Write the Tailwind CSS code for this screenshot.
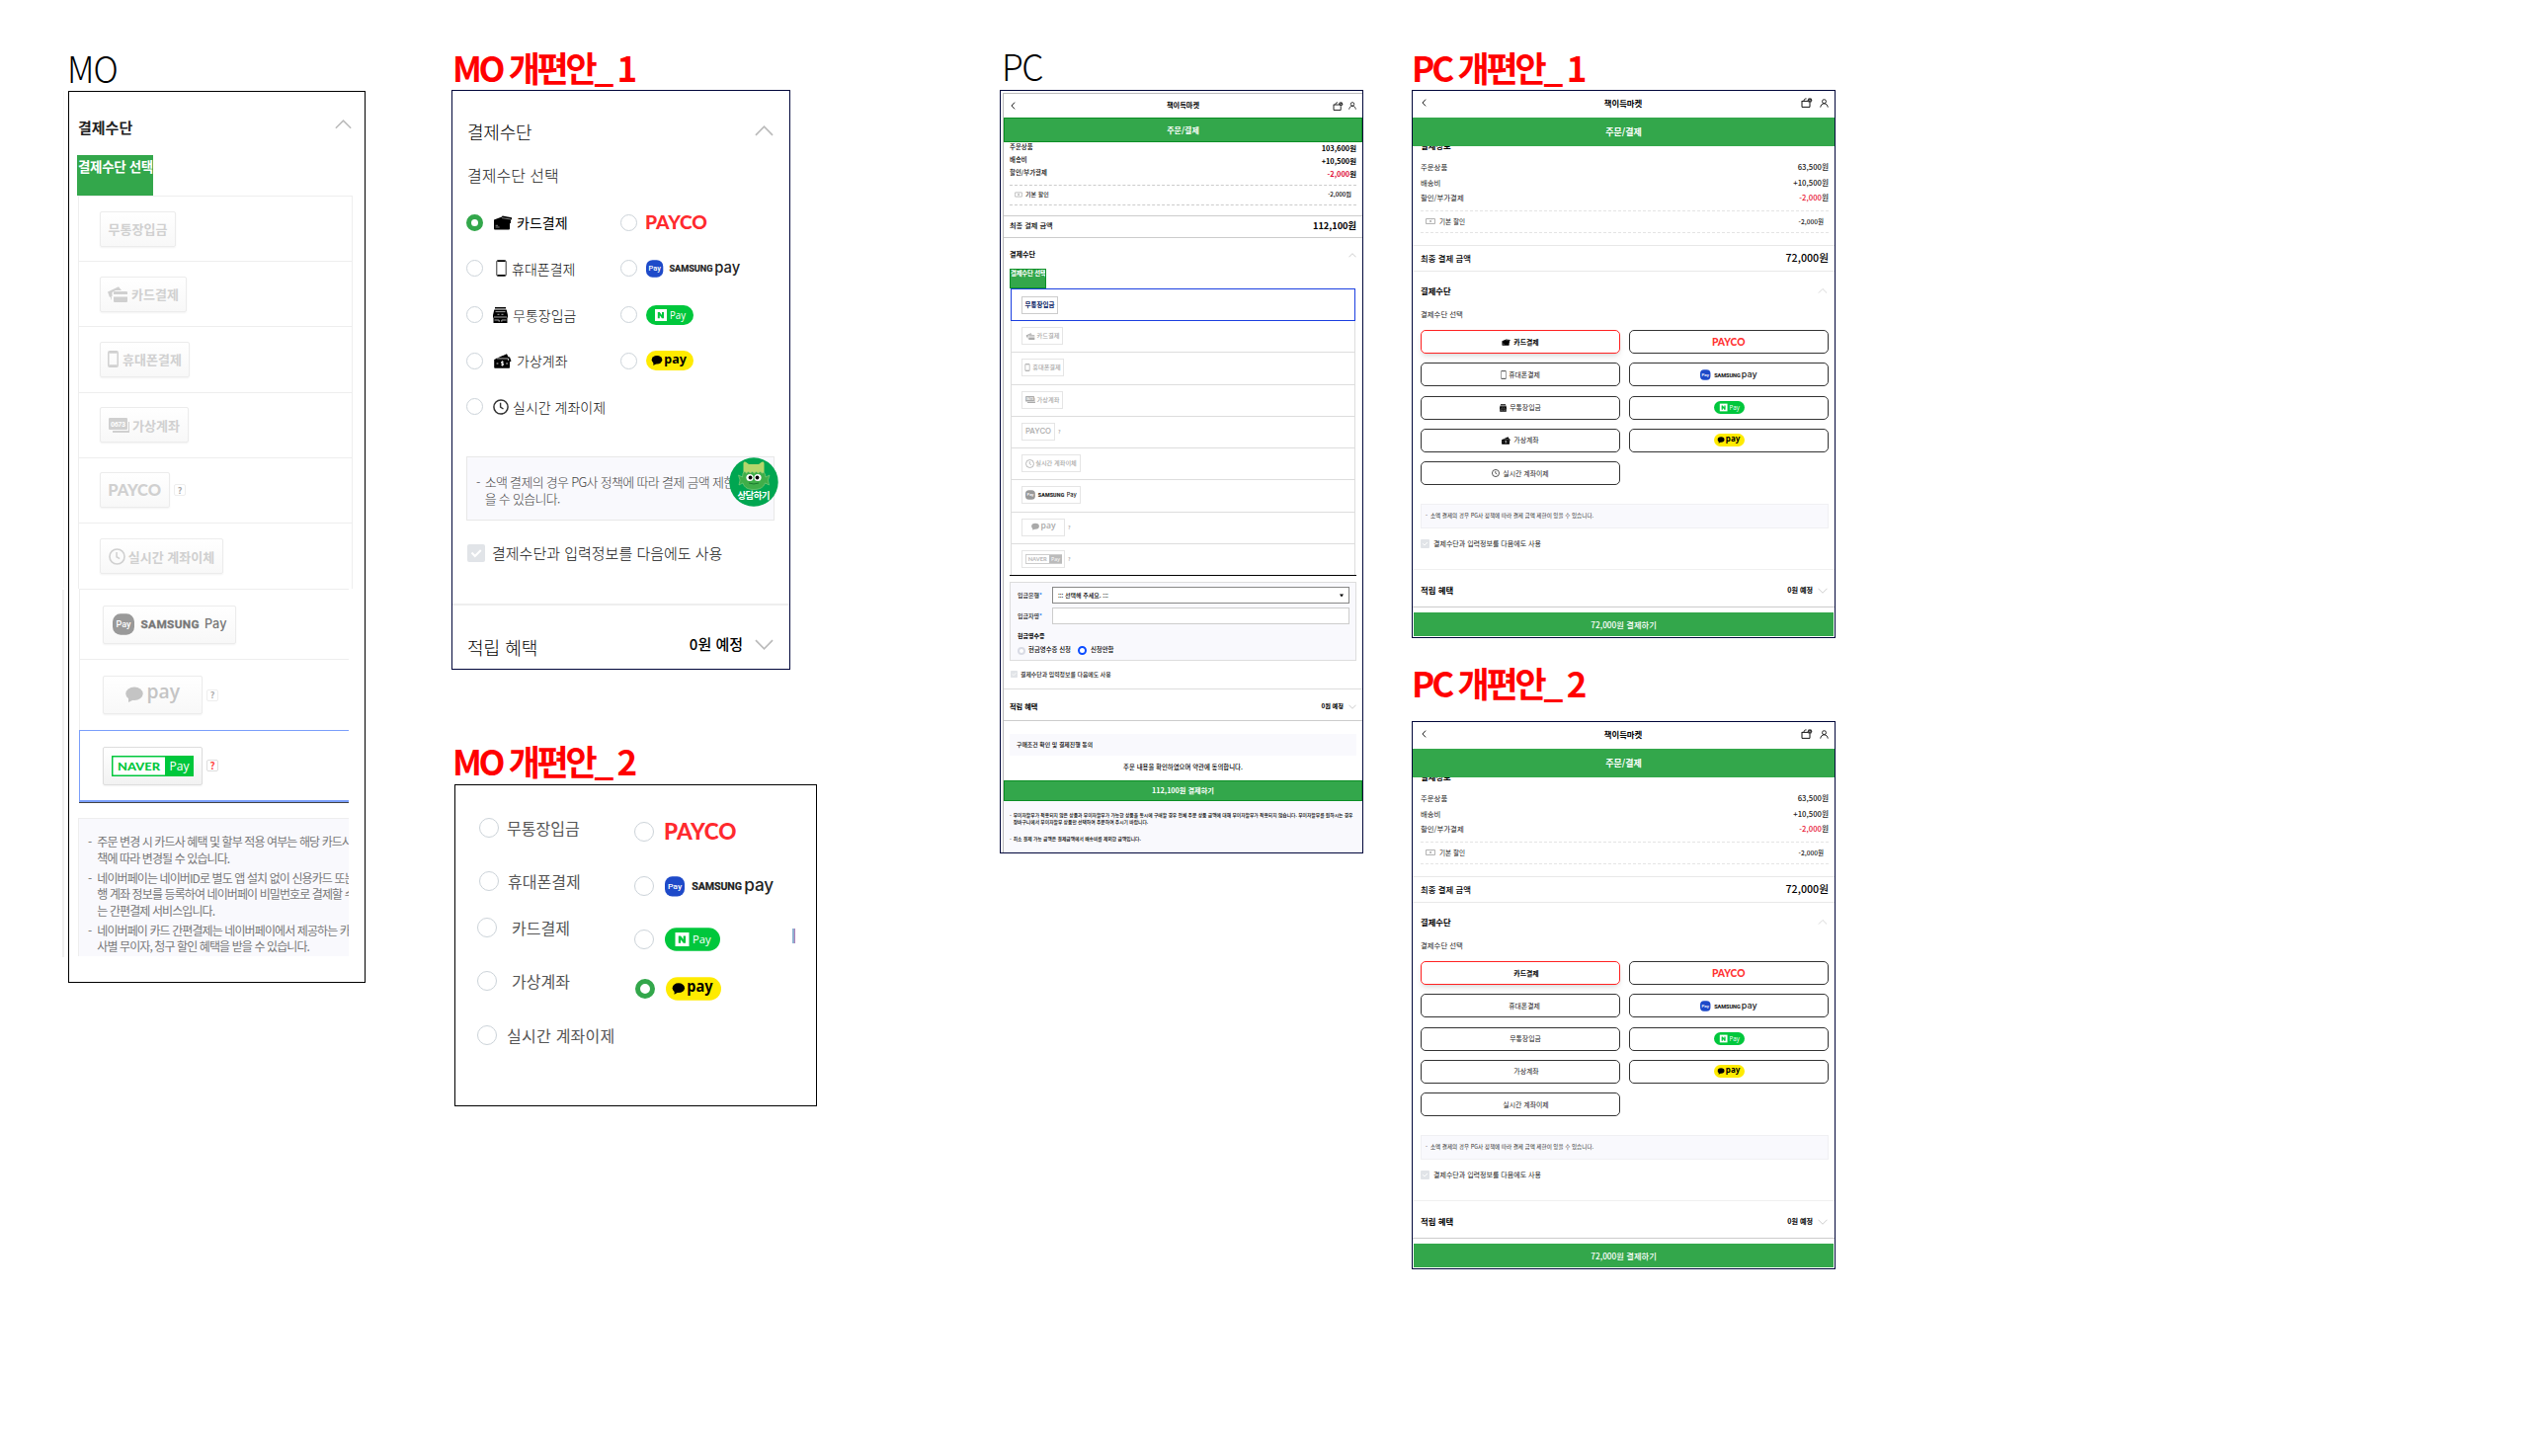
<!DOCTYPE html>
<html lang="ko">
<head>
<meta charset="utf-8">
<title>결제수단 개편안</title>
<script src="https://cdn.jsdelivr.net/npm/@tailwindcss/browser@4"></script>
</head>
<body class="bg-white">
<!-- Shared icons and payment logos -->
<svg class="hidden">
  <symbol id="i-card" viewBox="0 0 20 15"><path fill="currentColor" d="M1 4.500 9 1.500l.6-.9 9.400 1.600v2l-1 .2-.1 3.600-.9.200V13.500a1 1 0 0 1-1 1H2a1 1 0 0 1-1-1z"/><path d="M9 2.600 18 4M2.600 12h4M2.600 10.300h2.500" stroke="#fff" stroke-width=".7" opacity=".7"/></symbol>
  <symbol id="i-card2" viewBox="0 0 20 16"><g fill="currentColor"><path d="M0 5.500 11 .3 14 4H8L4.500 6v4L2 11zM3 11.500l1-1.500v4z"/><path fill-rule="evenodd" d="M7 5h12a1 1 0 0 1 1 1v9a1 1 0 0 1-1 1H7a1 1 0 0 1-1-1V6a1 1 0 0 1 1-1zm-1 3v2.500h14V8z"/></g></symbol>
  <symbol id="i-phone" viewBox="0 0 11 17"><rect x=".8" y=".6" width="9.400" height="15.800" rx="1.300" fill="none" stroke="currentColor" stroke-width=".8"/><path d="M1.500 1.300h8M1.500 15.700h8" stroke="currentColor" stroke-width="1.300"/></symbol>
  <symbol id="i-phone2" viewBox="0 0 11 17"><rect x=".8" y=".8" width="9.400" height="15.400" rx="1.300" fill="none" stroke="currentColor" stroke-width="1.500"/><path d="M1.500 1.800h8M1.500 15.200h8" stroke="currentColor" stroke-width="2"/></symbol>
  <symbol id="i-bank" viewBox="0 0 15 16"><path fill="currentColor" d="M2 0h11v1.500H2zM1.300 2.600h12.400L15 8v2.500h-.5V16H.5v-5.500H0V8z"/><path d="M2.500 4.600h10M1 10h13M1.500 13h4.700v1.800M8.800 14.800V13h4.700M4.500 7.300h2M8.500 7.300h2" stroke="#fff" stroke-width=".8" fill="none" opacity=".8"/></symbol>
  <symbol id="i-cash" viewBox="0 0 18 15"><path fill="currentColor" d="M2 5 13 .2l1.500 3 1.500.3 1.500 4-1.500 1V14a.8.8 0 0 1-.8.8H1A.8.8 0 0 1 .2 14V6l1.300-.6z"/><path d="M3 4.900 14.500 5v2" stroke="#fff" stroke-width=".7" fill="none"/><path d="M9.800 8.300H7.500v1.600h2v1.700H7.200M8.500 7.300v5.300M2.600 10h1.800M12.200 10H14" stroke="#fff" stroke-width=".8" fill="none"/></symbol>
  <symbol id="i-acct" viewBox="0 0 21 15"><path fill="currentColor" d="M1 0h17a1 1 0 0 1 1 1v10a1 1 0 0 1-1 1H1a1 1 0 0 1-1-1V1a1 1 0 0 1 1-1zM20 4h1v11H4v-2h16z"/><text x="2" y="8.500" font-family="Roboto" font-weight="700" font-size="7" textLength="15" fill="#fff">0673</text></symbol>
  <symbol id="i-clock" viewBox="0 0 16 16"><circle cx="8" cy="8" r="7.100" fill="none" stroke="currentColor" stroke-width="1.500"/><path d="M7.600 3.800V8.200L10.500 10" fill="none" stroke="currentColor" stroke-width="1.400"/></symbol>
  <symbol id="i-up" viewBox="0 0 20 11"><path d="M1 10 10 1l9 9" fill="none" stroke="#bbb" stroke-width="1.800"/></symbol>
  <symbol id="i-down" viewBox="0 0 20 11"><path d="M1 1l9 9 9-9" fill="none" stroke="#bbb" stroke-width="1.800"/></symbol>
  <symbol id="i-check" viewBox="0 0 18 18"><rect width="18" height="18" rx="2" fill="#e1e4e8"/><path d="M4.500 8.500l3.300 3.500 6-6" fill="none" stroke="#fff" stroke-width="2"/></symbol>
  <symbol id="i-back" viewBox="0 0 6 10"><path d="M5 .8 1 5l4 4.200" fill="none" stroke="#111" stroke-width="1.200"/></symbol>
  <symbol id="i-cart" viewBox="0 0 12 10"><path d="M1 3.400h6M1 3v6.400h8V5M3 3.200c0-1.800 1-2.300 2.500-2.300" fill="none" stroke="#111" stroke-width="1"/><circle cx="9" cy="2.600" r="2.300" fill="#333"/><path d="M8.300 1.800l1.500 1.500" stroke="#fff" stroke-width=".7"/></symbol>
  <symbol id="i-user" viewBox="0 0 10 10"><circle cx="5" cy="3" r="2.200" fill="none" stroke="#111" stroke-width="1"/><path d="M.8 9.600C1.200 6.800 2.800 5.400 5 5.400s3.800 1.400 4.200 4.200" fill="none" stroke="#111" stroke-width="1"/></symbol>
  <symbol id="i-coupon" viewBox="0 0 10 6"><rect x=".4" y=".4" width="9.200" height="5.200" rx=".6" fill="none" stroke="#888" stroke-width=".7"/><path d="M4 2l2.200 2M6 1.700 4.200 4.300" stroke="#888" stroke-width=".6"/></symbol>
  <symbol id="l-payco" viewBox="0 0 62 15"><text x="-1" y="14.300" font-family="Lato" font-weight="900" font-size="19.600" textLength="63" lengthAdjust="spacingAndGlyphs" fill="currentColor">PAYCO</text></symbol>
  <symbol id="l-samsung" viewBox="0 0 96 18"><rect y=".2" width="17.300" height="17.500" rx="6.500" fill="#1e4ac9"/><text x="2.500" y="11.300" font-family="Roboto" font-weight="500" font-size="7" textLength="12.400" lengthAdjust="spacingAndGlyphs" fill="#fff">Pay</text><text x="23.500" y="12.400" font-family="Roboto" font-weight="700" font-size="9.200" textLength="44" fill="#222" stroke="#222" stroke-width=".2">SAMSUNG</text><text x="69.300" y="12.700" font-family="Inter" font-weight="500" font-size="15" textLength="26" lengthAdjust="spacingAndGlyphs" fill="#222">pay</text></symbol>
  <symbol id="l-samsung-g" viewBox="0 0 116 22"><rect y=".3" width="22" height="21.400" rx="8" fill="#999"/><text x="3.500" y="13.800" font-family="Roboto" font-weight="500" font-size="8.500" textLength="15" lengthAdjust="spacingAndGlyphs" fill="#fff">Pay</text><text x="28.500" y="15.300" font-family="Roboto" font-weight="700" font-size="11.800" textLength="59" fill="currentColor" stroke="currentColor" stroke-width=".3">SAMSUNG</text><text x="93" y="15.300" font-family="Inter" font-weight="500" font-size="13" textLength="22.500" lengthAdjust="spacingAndGlyphs" fill="currentColor">Pay</text></symbol>
  <symbol id="l-npay" viewBox="0 0 48 20"><rect width="48" height="20" rx="10" fill="#00c73c"/><path fill="#fff" d="M9 4h12v12H9z"/><path fill="#00c73c" d="M11.800 7h2l2.200 3V7h2v6.300h-2l-2.200-3v3h-2z"/><text x="24" y="13.500" font-family="Open Sans" font-weight="400" font-size="10" textLength="16" lengthAdjust="spacingAndGlyphs" fill="#fff">Pay</text></symbol>
  <symbol id="l-kpay" viewBox="0 0 48 20"><rect width="48" height="20" rx="10" fill="#ffeb00"/><ellipse cx="11" cy="9.300" rx="5.300" ry="4.200"/><path d="M7.500 11.500 7.300 15l3.500-2z"/><text x="18.300" y="12.600" font-family="Noto Sans" font-weight="700" font-size="13" textLength="22.500" lengthAdjust="spacingAndGlyphs">pay</text></symbol>
  <symbol id="l-kpay-g" viewBox="0 0 56 20"><g fill="currentColor"><ellipse cx="9" cy="8.300" rx="8.700" ry="6.800"/><path d="M3 12l0 5 6-3z"/><text x="21.500" y="13" font-family="Open Sans" font-weight="600" font-size="19" textLength="33.500" lengthAdjust="spacingAndGlyphs">pay</text></g></symbol>
  <symbol id="l-naver" viewBox="0 0 83 21"><path fill="currentColor" d="M0 0h83v21H0z"/><path fill="#fff" d="M1.500 1.500h52.500v18H1.500z"/><text x="6" y="14.800" font-family="Lato" font-weight="900" font-size="12" textLength="43" lengthAdjust="spacingAndGlyphs" fill="currentColor">NAVER</text><text x="58.500" y="14.800" font-family="Open Sans" font-size="12.500" textLength="20" lengthAdjust="spacingAndGlyphs" fill="#fff">Pay</text></symbol>
</svg>

<main class="relative h-[1474px] w-[2562px] overflow-hidden bg-white font-['Noto_Sans_CJK_KR',sans-serif] leading-none whitespace-nowrap text-black">

  <!-- Board titles -->
  <h2 class="absolute left-[68px] top-[48px] origin-left scale-x-[0.94] text-[37px] leading-[40px] font-light tracking-[-1px]">MO</h2>
  <h2 class="absolute left-[1014px] top-[46px] origin-left scale-x-[0.96] text-[37px] leading-[40px] font-light tracking-[-1.500px]">PC</h2>
  <h2 class="absolute left-[458px] top-[48px] text-[35px] leading-[40px] font-bold tracking-[-3.300px] text-[#f00]">MO 개편안_ 1</h2>
  <h2 class="absolute left-[458px] top-[750px] text-[35px] leading-[40px] font-bold tracking-[-3.300px] text-[#f00]">MO 개편안_ 2</h2>
  <h2 class="absolute left-[1429px] top-[48px] text-[35px] leading-[40px] font-bold tracking-[-3.200px] text-[#f00]">PC 개편안_ 1</h2>
  <h2 class="absolute left-[1429px] top-[671px] text-[35px] leading-[40px] font-bold tracking-[-3.200px] text-[#f00]">PC 개편안_ 2</h2>

  <div class="absolute left-[64px] top-[92px] h-[503px] w-px bg-[#f7f7f7]"></div>
  <div class="absolute left-[63px] top-[597px] h-[372px] w-[2px] bg-[#f0f0f0]"></div>

  <!-- MO : current mobile -->
  <section class="absolute left-[69px] top-[92px] flex h-[903px] w-[301px] flex-col border border-black">
    <div class="flex h-[64px] shrink-0 items-center justify-between pt-[6px] pr-[13px] pl-[9px]">
      <h3 class="text-[15px] font-bold text-[#222]">결제수단</h3>
      <svg class="mb-1 h-[10px] w-[17px]"><use href="#i-up"/></svg>
    </div>
    <div class="ml-[8px] h-[41px] w-[77px] shrink-0 overflow-hidden bg-[#33a74b] pt-[5px] pl-px text-[13.500px] font-bold tracking-[-0.350px] text-white">결제수단 선택</div>
    <div class="ml-[9px] w-[278px] divide-y divide-[#eee] border border-b-0 border-[#eee] text-[13px] font-bold text-[#d0d0d0]">
      <div class="flex h-[66.200px] items-center pl-[21px]"><span class="flex h-[36px] w-[77px] items-center justify-center rounded-[2px] border border-[#ececec] bg-linear-to-b from-white to-[#f8f8f8] shadow-xs">무통장입금</span></div>
      <div class="flex h-[66.200px] items-center pl-[21px]"><span class="flex h-[36px] w-[88px] items-center justify-center gap-1 rounded-[2px] border border-[#ececec] bg-linear-to-b from-white to-[#f8f8f8] shadow-xs"><svg class="h-[16px] w-[20px]"><use href="#i-card2"/></svg>카드결제</span></div>
      <div class="flex h-[66.200px] items-center pl-[21px]"><span class="flex h-[36px] w-[91px] items-center justify-center gap-1 rounded-[2px] border border-[#ececec] bg-linear-to-b from-white to-[#f8f8f8] shadow-xs"><svg class="h-[17px] w-[11px]"><use href="#i-phone2"/></svg>휴대폰결제</span></div>
      <div class="flex h-[66.200px] items-center pl-[21px]"><span class="flex h-[36px] w-[90px] items-center justify-center gap-[3px] rounded-[2px] border border-[#ececec] bg-linear-to-b from-white to-[#f8f8f8] shadow-xs"><svg class="h-[15px] w-[21px]"><use href="#i-acct"/></svg>가상계좌</span></div>
      <div class="flex h-[66.200px] items-center gap-1 pl-[21px]"><span class="flex h-[36px] w-[71px] items-center justify-center rounded-[2px] border border-[#ececec] bg-linear-to-b from-white to-[#f8f8f8] shadow-xs"><svg class="h-[13px] w-[53px]"><use href="#l-payco"/></svg></span><span class="flex size-[12px] items-center justify-center rounded-[2px] border border-[#eee] text-[9px] text-[#aaa]">?</span></div>
      <div class="flex h-[66.200px] items-center pl-[21px]"><span class="flex h-[36px] w-[125px] items-center justify-center gap-[3px] rounded-[2px] border border-[#ececec] bg-linear-to-b from-white to-[#f8f8f8] shadow-xs"><svg class="size-[17px]"><use href="#i-clock"/></svg>실시간 계좌이체</span></div>
    </div>
    <div class="ml-[10px] w-[273px] shrink-0 border-l border-[#eee]">
      <div class="flex h-[71px] items-center border-t border-[#eee] pl-[23px]"><span class="flex h-[39px] w-[135px] items-center justify-center rounded-[2px] border border-[#ececec] bg-linear-to-b from-white to-[#f8f8f8] text-[#777] shadow-xs"><svg class="h-[22px] w-[116px]"><use href="#l-samsung-g"/></svg></span></div>
      <div class="flex h-[72px] items-center gap-1 border-t border-[#eee] pl-[23px]"><span class="flex h-[39px] w-[101px] items-center justify-center rounded-[2px] border border-[#ececec] bg-linear-to-b from-white to-[#f8f8f8] text-[#c4c4c4] shadow-xs"><svg class="h-[20px] w-[56px]"><use href="#l-kpay-g"/></svg></span><span class="flex size-[12px] items-center justify-center rounded-[2px] border border-[#eee] text-[9px] font-bold text-[#aaa]">?</span></div>
    </div>
    <div class="ml-[10px] w-[273px] shrink-0 border-b border-[#444]">
      <div class="flex h-[73px] items-center gap-1 border-t border-b-2 border-l border-[#7a9ffb] pl-[23px]"><span class="flex h-[39px] w-[101px] items-center justify-center rounded-[2px] border border-[#ddd] bg-linear-to-b from-white to-[#f2f2f2] text-[#00c73c] shadow-xs"><svg class="h-[21px] w-[83px]"><use href="#l-naver"/></svg></span><span class="flex size-[12px] items-center justify-center rounded-[2px] border border-[#ddd] text-[10px] font-bold text-[#f44]">?</span></div>
    </div>
    <ul class="mt-[15px] ml-[9px] flex h-[140px] w-[274px] shrink-0 flex-col gap-[3.500px] overflow-hidden border-t border-l border-[#eee] bg-[#f9f9fd] pt-[15px] pl-[9px] text-[12px] leading-[16.500px] tracking-[-0.900px] text-[#777]">
      <li class="flex gap-[6px]"><span>-</span><span>주문 변경 시 카드사 혜택 및 할부 적용 여부는 해당 카드사<br>책에 따라 변경될 수 있습니다.</span></li>
      <li class="flex gap-[6px]"><span>-</span><span>네이버페이는 네이버ID로 별도 앱 설치 없이 신용카드 또는<br>행 계좌 정보를 등록하여 네이버페이 비밀번호로 결제할 수<br>는 간편결제 서비스입니다.</span></li>
      <li class="flex gap-[6px]"><span>-</span><span>네이버페이 카드 간편결제는 네이버페이에서 제공하는 카<br>사별 무이자, 청구 할인 혜택을 받을 수 있습니다.</span></li>
    </ul>
  </section>

  <!-- MO revision 1 -->
  <section class="absolute left-[457px] top-[91px] flex h-[587px] w-[343px] flex-col border border-[#00063a]">
    <div class="flex h-[61px] items-end justify-between pr-[16px] pl-[15px] pb-[11px]"><h3 class="text-[18px] tracking-[-0.200px] font-light">결제수단</h3><svg class="mb-[4px] h-[11px] w-[19px]"><use href="#i-up"/></svg></div>
    <p class="flex h-[50px] items-center pl-[15px] text-[16px] font-light text-[#222]">결제수단 선택</p>
    <div class="grid grid-cols-[156px_1fr] auto-rows-[46.600px] items-center pl-[14px] text-[14px] font-light text-[#111] *:flex *:items-center">
      <div><span class="size-[17px] rounded-full border-[5px] border-[#33a74b]"></span><svg class="ml-[10px] h-[15px] w-[20px] text-black"><use href="#i-card"/></svg><b class="ml-[4px] text-black">카드결제</b></div>
      <div><span class="mr-[9px] size-[17px] rounded-full border border-[#ccd3d9]"></span><svg class="h-[15px] w-[62px] text-[#ff2a2e]"><use href="#l-payco"/></svg></div>
      <div><span class="size-[17px] rounded-full border border-[#ccd3d9]"></span><svg class="ml-[13px] h-[17px] w-[11px] text-black"><use href="#i-phone"/></svg><span class="ml-[5px]">휴대폰결제</span></div>
      <div><span class="mr-[9px] size-[17px] rounded-full border border-[#ccd3d9]"></span><svg class="h-[18px] w-[96px]"><use href="#l-samsung"/></svg></div>
      <div><span class="size-[17px] rounded-full border border-[#ccd3d9]"></span><svg class="ml-[10px] h-[16px] w-[15px] text-black"><use href="#i-bank"/></svg><span class="ml-[5px]">무통장입금</span></div>
      <div><span class="mr-[9px] size-[17px] rounded-full border border-[#ccd3d9]"></span><svg class="h-[20px] w-[48px]"><use href="#l-npay"/></svg></div>
      <div><span class="size-[17px] rounded-full border border-[#ccd3d9]"></span><svg class="ml-[11px] h-[15px] w-[18px] text-black"><use href="#i-cash"/></svg><span class="ml-[5px]">가상계좌</span></div>
      <div><span class="mr-[9px] size-[17px] rounded-full border border-[#ccd3d9]"></span><svg class="h-[20px] w-[48px]"><use href="#l-kpay"/></svg></div>
      <div><span class="size-[17px] rounded-full border border-[#ccd3d9]"></span><svg class="ml-[10px] size-[16px] text-[#333]"><use href="#i-clock"/></svg><span class="ml-[4px]">실시간 계좌이제</span></div>
    </div>
    <div class="relative mt-[27px] ml-[14px] h-[65px] w-[312px] shrink-0 border border-[#e8e8e8] bg-[#f9f9fd] pt-[16px] pl-[9px]">
      <p class="flex gap-[5px] text-[13px] leading-[17px] font-light tracking-[-0.700px] text-[#444]"><span>-</span><span>소액 결제의 경우 PG사 정책에 따라 결제 금액 제한<br>을 수 있습니다.</span></p>
      <svg class="absolute top-0 -right-[5px] size-[50px]" viewBox="0 0 50 50">
        <circle cx="25" cy="25" r="24.700" fill="#00a651"/>
        <path d="M14.500 17V6.500c0-2.500 2-2.500 3.500-1L20 7h10l2-1.500c1.500-1.500 3.500-1.500 3.500 1V17z" fill="#b5d66b"/>
        <path d="M14 16q2-3 3.500 0 2-3 4 0 2-3 4 0 2-3 4 0 2-3 4 0 1.500-2 3 1l.5 3 4-2-1.500 5 1 5-4-2c-2 5-6 6.500-11.500 6.500S15.500 31 14 26l-4 2 1-5-1.500-5 4 2z" fill="#3fae49" stroke="#9fd48a" stroke-width=".5"/>
        <circle cx="21" cy="20.500" r="3.600" fill="#fff"/><circle cx="29" cy="20.500" r="3.600" fill="#fff"/><circle cx="21.500" cy="20.500" r="1.900"/><circle cx="28.500" cy="20.500" r="1.900"/>
        <path d="M20 26q5 2 10 0" stroke="#1c7a30" fill="none"/>
        <text x="8.500" y="42" font-family="Noto Sans CJK KR" font-weight="700" font-size="9.500" textLength="33" fill="#fff">상담하기</text>
      </svg>
    </div>
    <div class="flex h-[84px] shrink-0 items-center pb-[19px] pl-[15px]"><svg class="size-[18px]"><use href="#i-check"/></svg><span class="ml-[7px] text-[15px] font-light text-[#111]">결제수단과 입력정보를 다음에도 사용</span></div>
    <div class="flex h-[66px] shrink-0 items-center border-t-2 border-[#eee] pt-[19px] pr-[16px] pl-[15px]"><h3 class="grow text-[18px] font-light">적립 혜택</h3><b class="mb-[6px] text-[15px] font-medium">0원 예정</b><svg class="ml-[12px] mb-1 h-[11px] w-[19px]"><use href="#i-down"/></svg></div>
  </section>

  <!-- MO revision 2 -->
  <section class="absolute left-[460px] top-[794px] flex h-[326px] w-[367px] border border-black text-[16px] text-[#555]">
    <div class="flex w-[168px] flex-col pt-[32.500px] pl-[22px] *:flex *:items-center">
      <div class="h-[20px] pl-[2px]"><span class="size-[20px] shrink-0 rounded-full border border-[#ccd3d9]"></span><span class="ml-[8px]">무통장입금</span></div>
      <div class="mt-[34.500px] h-[20px] pl-[2px]"><span class="size-[20px] shrink-0 rounded-full border border-[#ccd3d9]"></span><span class="ml-[9px]">휴대폰결제</span></div>
      <div class="mt-[26.500px] h-[20px]"><span class="size-[20px] shrink-0 rounded-full border border-[#ccd3d9]"></span><span class="ml-[15px]">카드결제</span></div>
      <div class="mt-[34.500px] h-[20px]"><span class="size-[20px] shrink-0 rounded-full border border-[#ccd3d9]"></span><span class="ml-[15px]">가상계좌</span></div>
      <div class="mt-[34.500px] h-[20px]"><span class="size-[20px] shrink-0 rounded-full border border-[#ccd3d9]"></span><span class="ml-[10px] tracking-[0.250px]">실시간 계좌이제</span></div>
    </div>
    <div class="ml-[13px] flex w-[150px] flex-col pt-[35px] *:flex *:items-center">
      <div class="h-[24px]"><span class="mr-[11px] size-[20px] rounded-full border border-[#ccd3d9]"></span><svg class="h-[17.500px] w-[72.500px] text-[#ff2a2e]"><use href="#l-payco"/></svg></div>
      <div class="mt-[31px] h-[24px]"><span class="mr-[11px] size-[20px] rounded-full border border-[#ccd3d9]"></span><svg class="h-[21px] w-[111px]"><use href="#l-samsung"/></svg></div>
      <div class="mt-[30px] h-[24px]"><span class="mr-[11px] size-[20px] rounded-full border border-[#ccd3d9]"></span><svg class="h-[24px] w-[56px]"><use href="#l-npay"/></svg></div>
      <div class="mt-[26px] h-[24px] pl-px"><span class="mr-[11px] size-[20px] rounded-full border-[5px] border-[#33a74b]"></span><svg class="h-[24px] w-[56px]"><use href="#l-kpay"/></svg></div>
    </div>
    <span class="mt-[145px] ml-[10px] h-[15px] w-[3px] border-r border-l-2 border-r-[#b080b8] border-l-[#8fb0d0]"></span>
  </section>

  <!-- PC : current desktop -->
  <section class="absolute left-[1012px] top-[91px] flex h-[773px] w-[368px] border border-[#00063a] pt-[2px] pl-[2px]">
    <div class="flex w-full flex-col border-t border-l border-[#bbb] text-[7px] font-medium text-[#222]">
      <div class="flex h-[24px] shrink-0 items-center pr-[6px] pl-[7px]"><svg class="h-[8px] w-[5px]"><use href="#i-back"/></svg><b class="ml-[18px] grow text-center text-[7.200px] text-black">책이득마켓</b><svg class="h-[9px] w-[11px]"><use href="#i-cart"/></svg><svg class="ml-[5px] size-[8px]"><use href="#i-user"/></svg></div>
      <div class="flex h-[25px] shrink-0 items-center justify-center border border-[#0b8f25] bg-[#33a74b] text-[8px] font-bold text-white">주문/결제</div>
      <div class="flex h-[43px] shrink-0 flex-col justify-between pt-[2px] pr-[6px] pb-[8px] pl-[6px] text-[6.400px] text-black">
        <div class="flex justify-between"><span>주문상품</span><b class="text-[7.400px]">103,600원</b></div>
        <div class="flex justify-between"><span>배송비</span><b class="text-[7.400px]">+10,500원</b></div>
        <div class="flex justify-between"><span>할인/부가결제</span><b class="text-[7.400px]"><span class="text-[#e0103a]">-2,000</span>원</b></div>
      </div>
      <div class="mx-[6px] flex h-[21px] shrink-0 items-center border-y border-dashed border-[#ccc] px-[5px] pb-px text-[6px]"><svg class="mr-[3px] h-[6px] w-[8px]"><use href="#i-coupon"/></svg><span class="grow">기본 할인</span><span class="text-[6.200px] text-black">-2,000원</span></div>
      <div class="mt-[10px] flex h-[23px] shrink-0 items-center justify-between border-y border-[#ccc] px-[6px] pb-px"><b class="text-[7.200px] font-medium text-black">최종 결제 금액</b><b class="text-[9.200px] text-black">112,100원</b></div>
      <div class="flex h-[31px] shrink-0 items-center justify-between px-[6px] pt-[3px]"><b class="text-[7.100px] text-black">결제수단</b><svg class="h-[5px] w-[8px]"><use href="#i-up"/></svg></div>
      <div class="ml-[6px] h-[20px] w-[37px] shrink-0 overflow-hidden border border-[#0b8f25] bg-[#33a74b] pt-[1px] text-[6.400px] font-bold tracking-[-0.200px] text-white">결제수단 선택</div>
      <div class="mx-[7px] flex h-[33px] shrink-0 items-center border border-[#1b3fe0] pl-[10px]"><span class="flex h-[18px] w-[37px] items-center justify-center border border-[#ccc] text-[6.500px] font-bold text-[#0a1c66]">무통장입금</span></div>
      <div class="mx-[7px] flex h-[257px] shrink-0 flex-col divide-y divide-[#ddd] border-x border-[#ddd] text-[6.200px] text-[#aaa] *:flex *:flex-1 *:items-center *:pb-px *:pl-[10px]">
        <div><span class="flex h-[18px] w-[42px] items-center justify-center gap-[2px] border border-[#e5e5e5]"><svg class="h-[7px] w-[10px]"><use href="#i-card2"/></svg>카드결제</span></div>
        <div><span class="flex h-[18px] w-[43px] items-center justify-center gap-[2px] border border-[#e5e5e5]"><svg class="h-[8px] w-[6px]"><use href="#i-phone2"/></svg>휴대폰결제</span></div>
        <div><span class="flex h-[18px] w-[42px] items-center justify-center gap-[2px] border border-[#e5e5e5]"><svg class="h-[7px] w-[10px]"><use href="#i-acct"/></svg>가상계좌</span></div>
        <div><span class="mr-[3px] flex h-[18px] w-[34px] items-center justify-center border border-[#e5e5e5] font-['Inter'] text-[7.800px]">PAYCO</span><span class="text-[5px] font-bold">?</span></div>
        <div><span class="flex h-[18px] w-[60px] items-center justify-center gap-[1px] border border-[#e5e5e5]"><svg class="size-[9px]"><use href="#i-clock"/></svg>실시간 계좌이체</span></div>
        <div><span class="flex h-[18px] w-[60px] items-center justify-center border border-[#e5e5e5] text-[#222]"><svg class="h-[10px] w-[52px]"><use href="#l-samsung-g"/></svg></span></div>
        <div><span class="mr-[3px] flex h-[18px] w-[44px] items-center justify-center border border-[#e5e5e5]"><svg class="h-[9px] w-[25px]"><use href="#l-kpay-g"/></svg></span><span class="text-[5px] font-bold">?</span></div>
        <div><span class="mr-[3px] flex h-[18px] w-[44px] items-center justify-center border border-[#e5e5e5] text-[#bbb]"><svg class="h-[10px] w-[37px]"><use href="#l-naver"/></svg></span><span class="text-[5px] font-bold">?</span></div>
      </div>
      <div class="mx-[6px] h-px shrink-0 bg-black"></div>
      <div class="mx-[6px] mt-[6px] flex h-[80px] shrink-0 flex-col border border-[#ddd] bg-[#f9f9fd] pt-[4px] pr-[6px] pl-[7px] text-[6px]">
        <div class="flex items-center"><span class="w-[35px]">입금은행<span class="text-[#17e]">*</span></span><span class="flex h-[17px] grow items-center justify-between border border-[#888] bg-white px-[5px] text-black">::: 선택해 주세요. :::<svg class="size-[4px]" viewBox="0 0 4 4"><path d="M0 .5h4L2 3.500z"/></svg></span></div>
        <div class="mt-[4px] flex items-center"><span class="w-[35px]">입금자명<span class="text-[#17e]">*</span></span><span class="h-[17px] grow border border-[#ccc] bg-white"></span></div>
        <b class="mt-[9px] text-black">현금영수증</b>
        <div class="mt-[7px] flex items-center text-[6.400px] text-black"><span class="mr-[3px] size-[8px] rounded-full border-2 border-[#d9dbe5] bg-white"></span>현금영수증 신청<span class="mr-[4px] ml-[7px] size-[9px] rounded-full border-[2.500px] border-[#0a4bff] bg-white"></span>신청안함</div>
      </div>
      <div class="flex h-[28px] shrink-0 items-center pb-px pl-[7px] text-[5.900px]"><svg class="mr-[3px] size-[7px]"><use href="#i-check"/></svg>결제수단과 입력정보를 다음에도 사용</div>
      <div class="flex h-[33px] shrink-0 items-center border-y border-[#ccc] border-t-[#ddd] pt-[4px] pr-[6px] pl-[6px] text-black"><b class="grow text-[7.200px]">적립 혜택</b><b class="text-[6.200px]">0원 예정</b><svg class="ml-[5px] h-[5px] w-[8px]"><use href="#i-down"/></svg></div>
      <div class="mx-[6px] mt-[13px] flex h-[22px] shrink-0 items-center bg-[#f9f9fd] pl-[7px] text-[5.900px] text-black">구매조건 확인 및 결제진행 동의</div>
      <div class="flex h-[25px] shrink-0 items-center justify-center pb-px text-[6.400px] text-black">주문 내용을 확인하였으며 약관에 동의합니다.</div>
      <div class="flex h-[21px] shrink-0 items-center justify-center border border-[#0b8f25] bg-[#33a74b] text-[7.200px] font-bold text-white">112,100원 결제하기</div>
      <div class="grow bg-[#f9f9fd] pt-[10px] pl-[6px] text-[4.770px] leading-[7.300px] text-black">
        <p class="flex gap-[2px]"><span>-</span><span>무이자할부가 적용되지 않은 상품과 무이자할부가 가능한 상품을 동시에 구매할 경우 전체 주문 상품 금액에 대해 무이자할부가 적용되지 않습니다. 무이자할부를 원하시는 경우<br>장바구니에서 무이자할부 상품만 선택하여 주문하여 주시기 바랍니다.</span></p>
        <p class="mt-[9px] flex gap-[2px]"><span>-</span><span>최소 결제 가능 금액은 결제금액에서 배송비를 제외한 금액입니다.</span></p>
      </div>
    </div>
  </section>

  <!-- PC revisions 1 and 2: filled by the script below -->
  <section id="pc-rev-1" class="absolute left-[1429px] top-[91px] flex h-[555px] w-[429px] flex-col border border-[#00063a]"></section>
  <section id="pc-rev-2" class="absolute left-[1429px] top-[730px] flex h-[555px] w-[429px] flex-col border border-[#00063a]"></section>
</main>

<script>
// Revision 2 keeps the labels where they are and hides only the icons.
function pcBoard(withIcons) {
  const vis = withIcons ? '' : 'invisible';
  return `
    <div class="flex h-[27px] shrink-0 items-center pr-[6px] pl-[9px] pb-[3px]"><svg class="h-[8px] w-[5px]"><use href="#i-back"/></svg><b class="ml-[19px] grow text-center text-[8.400px]">책이득마켓</b><svg class="h-[10px] w-[12px]"><use href="#i-cart"/></svg><svg class="ml-[7px] size-[9px]"><use href="#i-user"/></svg></div>
    <div class="flex h-[29px] shrink-0 items-center justify-center bg-[#33a74b] text-[9px] font-bold text-white">주문/결제</div>
    <div class="flex h-[4px] shrink-0 items-end overflow-hidden pl-[8px] text-[8.300px] leading-[9px] font-bold">결제정보</div>
    <div class="flex h-[61px] shrink-0 flex-col justify-between pt-[12px] pr-[6px] pb-[9px] pl-[8px] text-[7.400px] leading-[9px] text-[#222]">
      <div class="flex justify-between"><span>주문상품</span><span class="text-[7.700px] font-medium">63,500원</span></div>
      <div class="flex justify-between"><span>배송비</span><span class="text-[7.700px] font-medium">+10,500원</span></div>
      <div class="flex justify-between"><span>할인/부가결제</span><span class="text-[7.700px] font-medium"><span class="text-[#e8203a]">-2,000</span>원</span></div>
    </div>
    <div class="mr-[6px] ml-[8px] flex h-[23px] shrink-0 items-center border-y border-dashed border-[#e4e4e4] px-[5px] pb-px text-[6.600px] text-[#222]"><svg class="mr-[4px] h-[6px] w-[10px]"><use href="#i-coupon"/></svg><span class="grow">기본 할인</span><span class="font-medium">-2,000원</span></div>
    <div class="mt-[12px] flex h-[27px] shrink-0 items-center justify-between border-y border-[#e8e8e8] pr-[6px] pb-px pl-[8px]"><span class="text-[8.400px] font-medium">최종 결제 금액</span><span class="text-[10.700px] font-medium">72,000원</span></div>
    <div class="flex h-[41px] shrink-0 items-center justify-between pr-[7px] pb-[2px] pl-[8px]"><b class="text-[8.300px]">결제수단</b><svg class="h-[5px] w-[10px] opacity-70"><use href="#i-up"/></svg></div>
    <div class="-mt-[2px] mb-[2px] flex h-[18px] shrink-0 items-start pl-[8px] text-[7.400px] text-[#222]">결제수단 선택</div>
    <div class="ml-[8px] grid w-[413px] shrink-0 grid-cols-2 gap-x-[9px] gap-y-[9.300px] text-[6.900px] text-[#222] *:flex *:h-[24px] *:items-center *:justify-center *:rounded-[5px] *:border">
      <div class="gap-[3px] border-[#f22] font-bold text-black shadow-md"><svg class="${vis} h-[7px] w-[9px]"><use href="#i-card"/></svg>카드결제</div>
      <div class="border-[#333]"><svg class="h-[8px] w-[34px] text-[#f33]"><use href="#l-payco"/></svg></div>
      <div class="gap-[2px] border-[#333]"><svg class="${vis} h-[9px] w-[6px]"><use href="#i-phone"/></svg>휴대폰결제</div>
      <div class="border-[#333]"><svg class="h-[11px] w-[58px]"><use href="#l-samsung"/></svg></div>
      <div class="gap-[3px] border-[#333]"><svg class="${vis} h-[8px] w-[7px] text-black"><use href="#i-bank"/></svg>무통장입금</div>
      <div class="border-[#333]"><svg class="h-[13px] w-[31px]"><use href="#l-npay"/></svg></div>
      <div class="gap-[3px] border-[#333]"><svg class="${vis} h-[8px] w-[9px] text-black"><use href="#i-cash"/></svg>가상계좌</div>
      <div class="border-[#333]"><svg class="h-[13px] w-[31px]"><use href="#l-kpay"/></svg></div>
      <div class="gap-[3px] border-[#333]"><svg class="${vis} size-[8px]"><use href="#i-clock"/></svg>실시간 계좌이제</div>
    </div>
    <div class="mt-[19px] mr-[6px] ml-[8px] flex h-[25px] shrink-0 items-center gap-[3px] border border-[#f0f0f3] bg-[#f9f9fd] pl-[4px] text-[5.600px] text-[#333]"><span>-</span>소액 결제의 경우 PG사 정책에 따라 결제 금액 제한이 있을 수 있습니다.</div>
    <div class="flex h-[41px] shrink-0 items-center pb-[10px] pl-[8px] text-[7px] text-[#222]"><svg class="mr-[4px] size-[9px]"><use href="#i-check"/></svg>결제수단과 입력정보를 다음에도 사용</div>
    <div class="flex h-[39px] shrink-0 items-center border-y border-[#f0f0f0] border-b-[#ccc] pt-[4px] pr-[7px] pl-[8px]"><b class="grow text-[8.400px]">적립 혜택</b><b class="mb-px text-[7.100px]">0원 예정</b><svg class="ml-[5px] h-[6px] w-[10px] opacity-80"><use href="#i-down"/></svg></div>
    <div class="mx-px mt-auto mb-px flex h-[24px] shrink-0 items-center justify-center bg-[#33a74b] text-[8.300px] font-medium text-white">72,000원 결제하기</div>`;
}
document.getElementById('pc-rev-1').innerHTML = pcBoard(true);
document.getElementById('pc-rev-2').innerHTML = pcBoard(false);
</script>
</body>
</html>
